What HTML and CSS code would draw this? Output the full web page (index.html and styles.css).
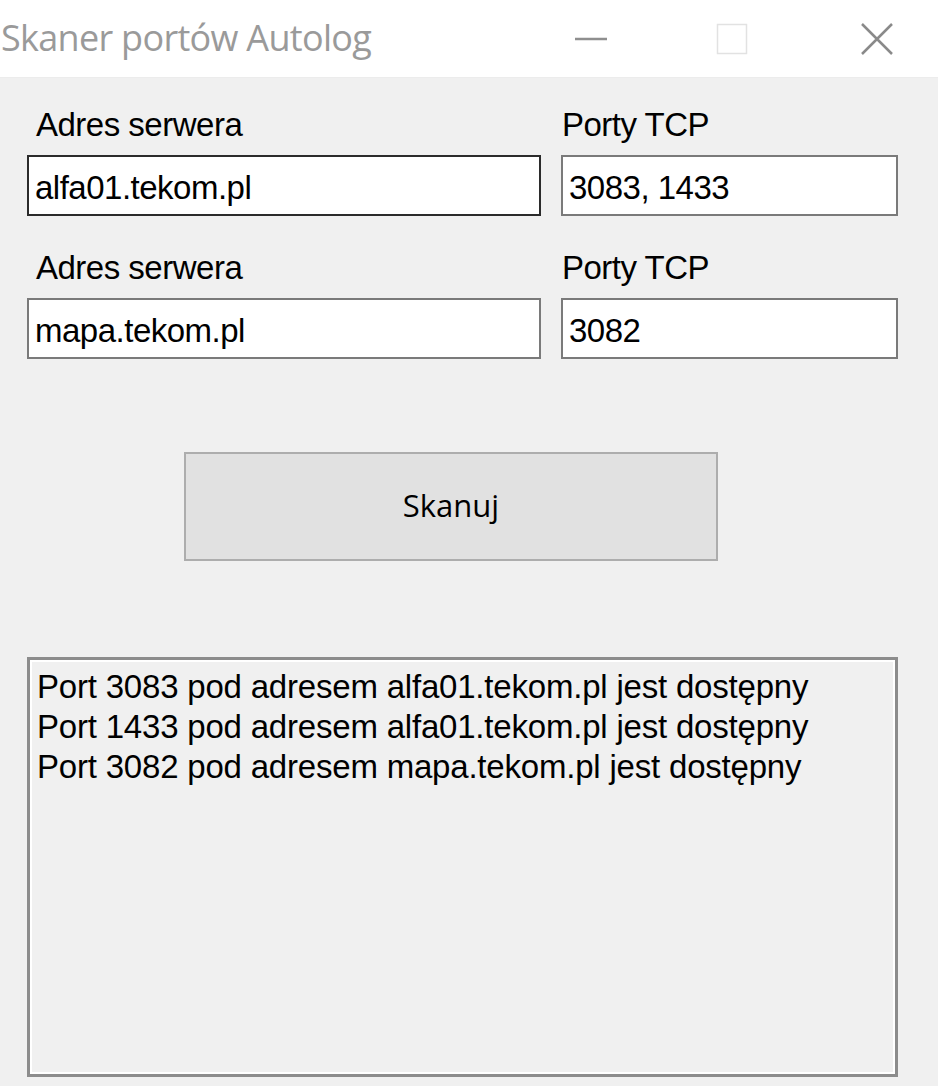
FILE: index.html
```html
<!DOCTYPE html>
<html lang="pl">
<head>
    <meta charset="UTF-8">
    <title>Skaner portów Autolog</title>
    <link rel="stylesheet" href="styles.css">
</head>
<body>
    <div class="window">
        <div class="titlebar">
            <span class="title">Skaner portów Autolog</span>
            <div class="controls">
                <svg class="ctl ctl-min" width="32" height="32" viewBox="0 0 32 32"><line x1="0" y1="16" x2="32" y2="16" stroke="#8f8f8f" stroke-width="2.5"/></svg>
                <svg class="ctl ctl-max" width="32" height="32" viewBox="0 0 32 32"><rect x="1.5" y="1.5" width="29" height="29" fill="none" stroke="#e2e2e2" stroke-width="1.5"/></svg>
                <svg class="ctl ctl-close" width="32" height="32" viewBox="0 0 32 32"><path d="M1 1 L31 31 M31 1 L1 31" stroke="#8a8a8a" stroke-width="2.5" fill="none"/></svg>
            </div>
        </div>

        <div class="form">
            <div class="fields">
                <label class="lbl lbl-host">Adres serwera</label>
                <label class="lbl lbl-port">Porty TCP</label>
                <input class="box box-focus" type="text" value="alfa01.tekom.pl">
                <input class="box" type="text" value="3083, 1433">

                <label class="lbl lbl-host row2">Adres serwera</label>
                <label class="lbl lbl-port row2">Porty TCP</label>
                <input class="box" type="text" value="mapa.tekom.pl">
                <input class="box" type="text" value="3082">
            </div>

            <div class="actions">
                <button class="btn">Skanuj</button>
            </div>

            <div class="log">
                <div class="log-line">Port 3083 pod adresem alfa01.tekom.pl jest dostępny</div>
                <div class="log-line">Port 1433 pod adresem alfa01.tekom.pl jest dostępny</div>
                <div class="log-line">Port 3082 pod adresem mapa.tekom.pl jest dostępny</div>
            </div>
        </div>
    </div>
</body>
</html>
```

FILE: styles.css
```css
body { margin: 0; background: #f0f0f0; font-family: "Liberation Sans", Arial, sans-serif; color: #000; }
.window { width: 938px; height: 1086px; overflow: hidden; }

.titlebar { height: 78px; background: #fff; display: flex; align-items: center; border-bottom: 1px solid #ececec; box-sizing: border-box; }
.title { font-family: "Open Sans", sans-serif; font-size: 36px; color: #9a9a9a; margin-left: 1px; letter-spacing: -0.7px; padding-bottom: 2px; }
.controls { margin-left: auto; display: flex; align-items: center; padding-right: 45px; }
.ctl { display: block; }
.ctl-max { margin-left: 109px; }
.ctl-close { margin-left: 113px; }

.form { padding: 27px 40px 0 27px; }
.fields { display: grid; grid-template-columns: 514px 337px; column-gap: 20px; }
.lbl { font-size: 33px; line-height: 40px; letter-spacing: -0.5px; height: 40px; margin-bottom: 10px; }
.lbl-host { padding-left: 9px; }
.lbl-port { padding-left: 1px; }
.lbl.row2 { margin-top: 32px; }

.box { box-sizing: border-box; height: 61px; width: 100%; margin: 0; padding: 5px 6px 0; border: 2px solid #7a7a7a; background: #fff; font-family: "Liberation Sans", Arial, sans-serif; font-size: 33px; line-height: 40px; letter-spacing: -0.5px; color: #000; outline: none; }
.box-focus { border-color: #2b2b2b; }

.actions { padding-top: 93px; padding-left: 157px; }
.btn { display: block; box-sizing: border-box; width: 534px; height: 109px; background: #e1e1e1; border: 2px solid #adadad; font-family: "Open Sans", sans-serif; font-size: 31px; color: #000; padding: 0 0 4px; }

.log { margin-top: 96px; box-sizing: border-box; height: 420px; border: 3px solid #8c8c8c; box-shadow: inset 0 0 0 2px #fff; padding: 7px 7px; }
.log-line { font-size: 33px; line-height: 40px; letter-spacing: -0.2px; white-space: nowrap; }
```
